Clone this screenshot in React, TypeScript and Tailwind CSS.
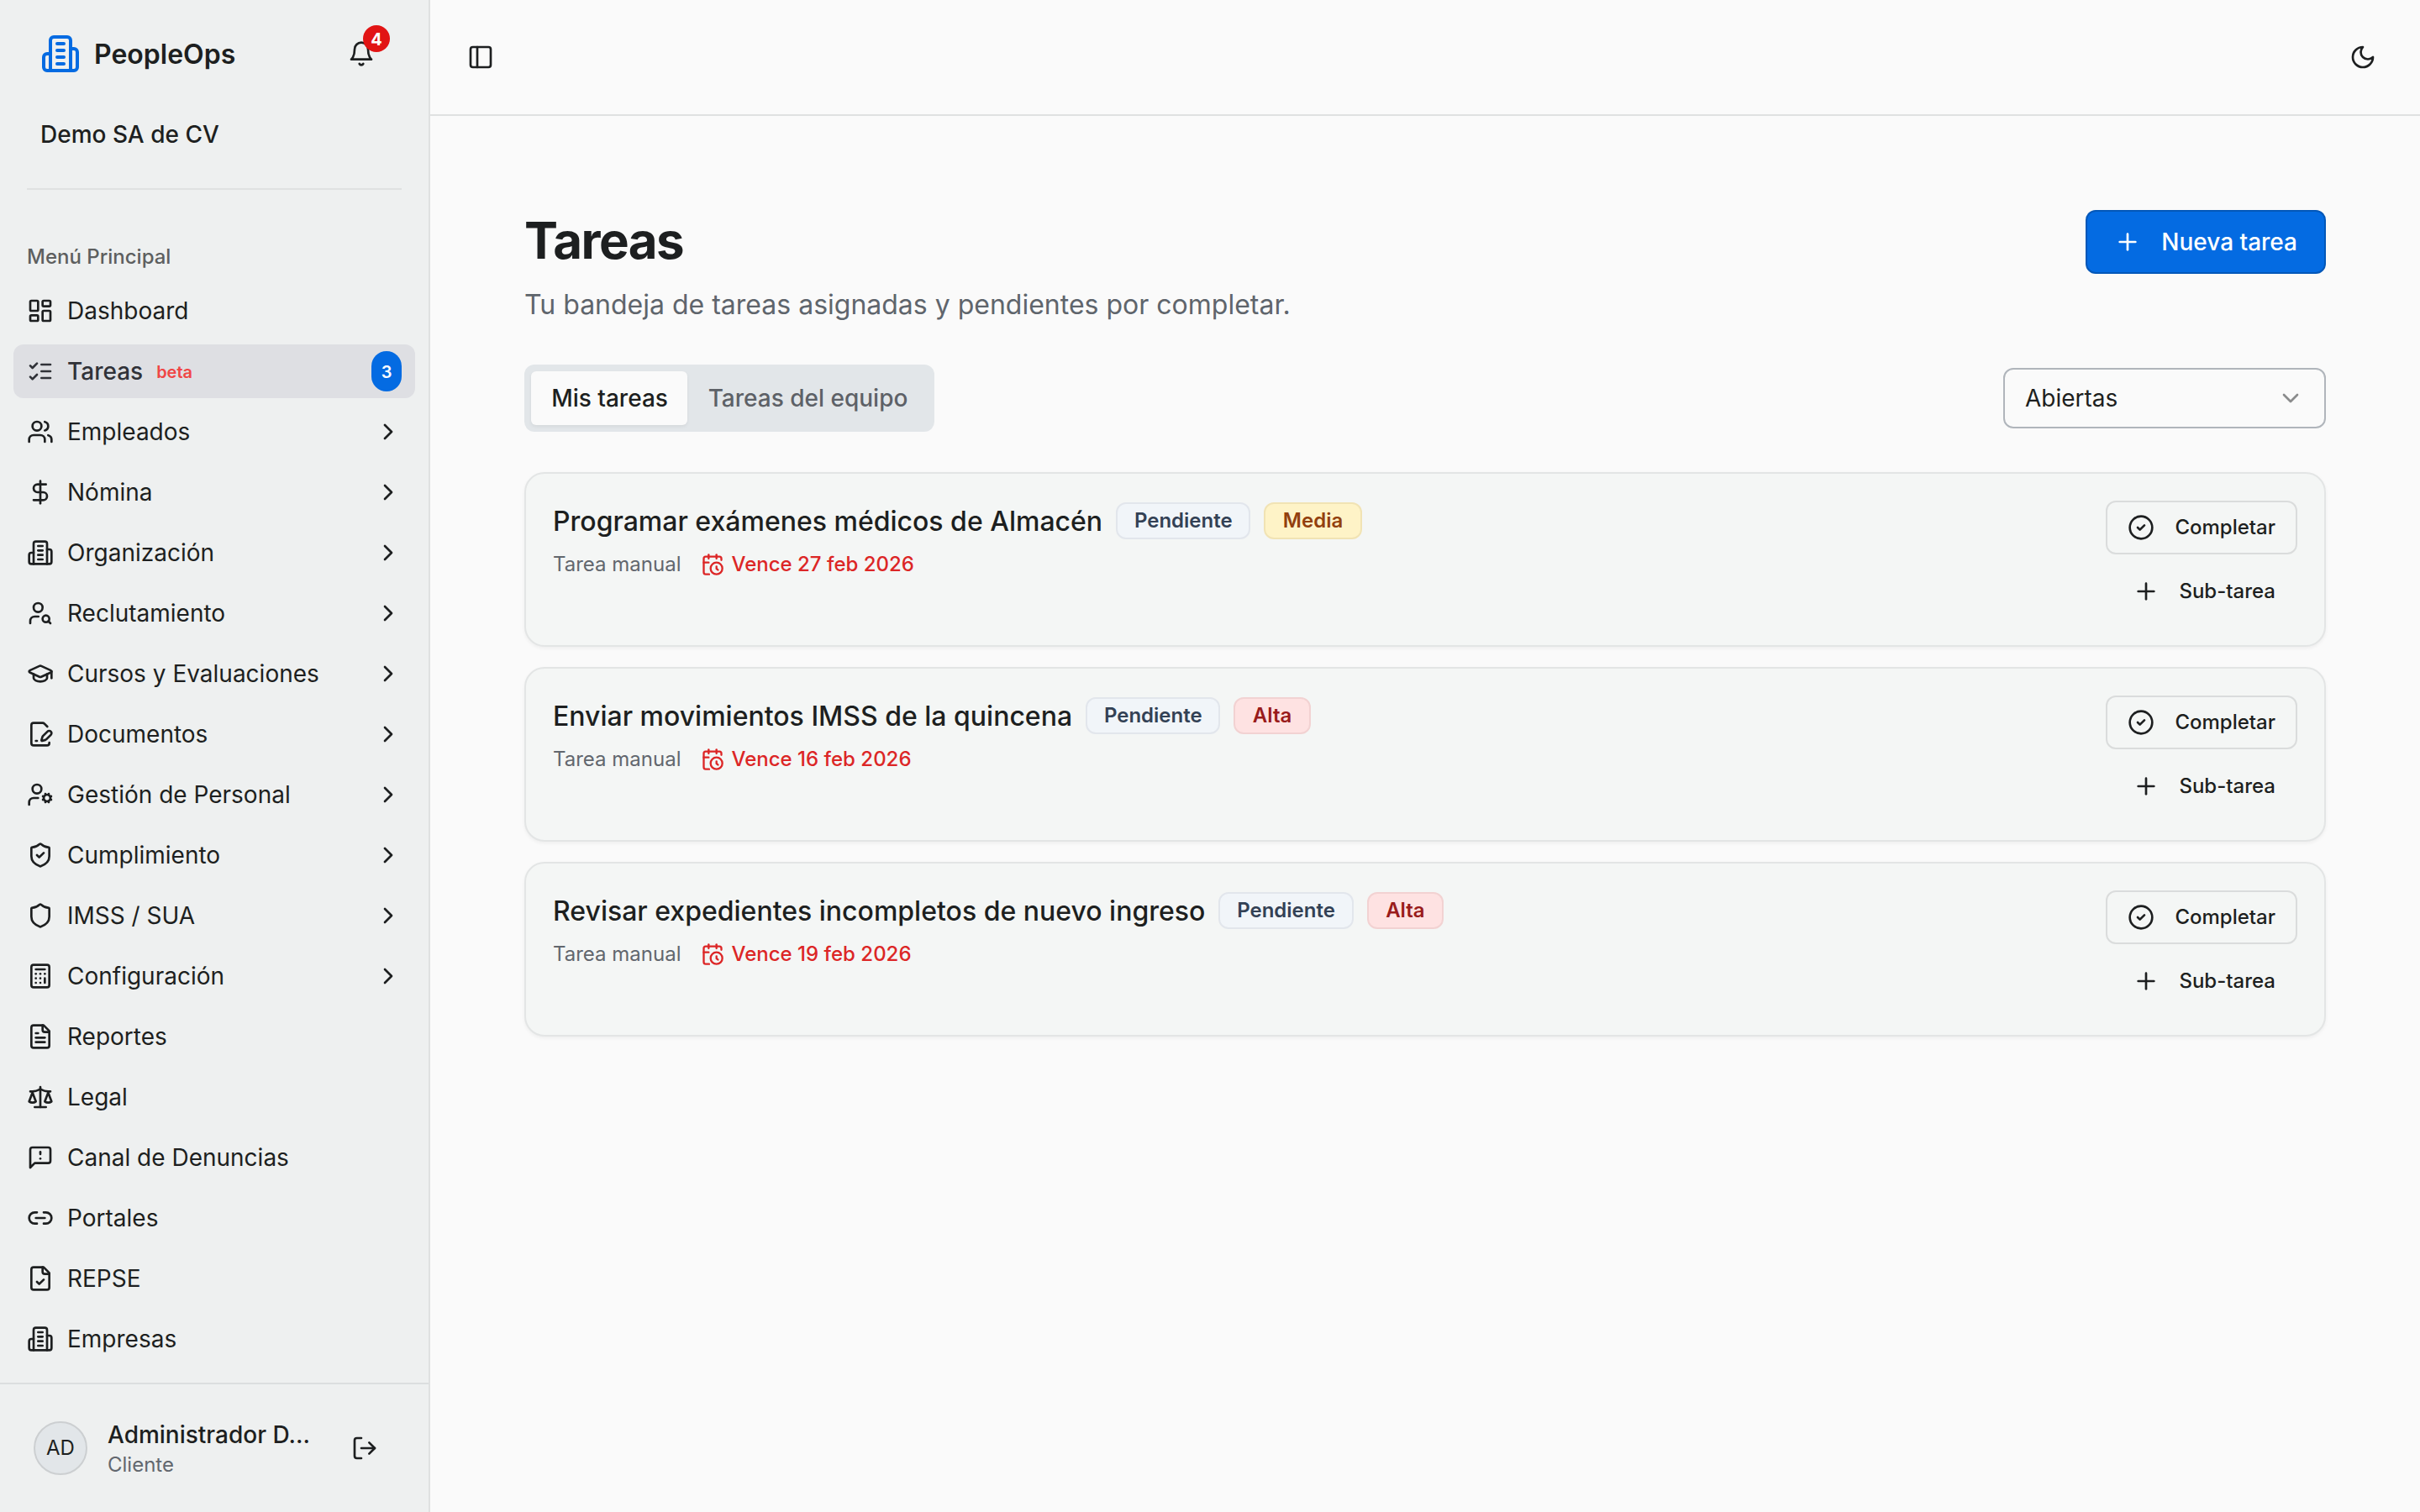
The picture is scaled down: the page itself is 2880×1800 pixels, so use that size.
import type { ReactNode } from 'react';
import {
  Calculator,
  ChevronDown,
  ChevronRight,
  CircleCheck,
  DollarSign,
  FilePenLine,
  GraduationCap,
  LayoutDashboard,
  Link2,
  LogOut,
  PanelLeft,
  Plus,
  Shield,
  ShieldCheck,
  UserCog,
  UserSearch,
  Users,
} from 'lucide-react';
import { clsx } from 'clsx';

type IconProps = { className?: string };

function Icon({ className, children }: { className?: string; children: ReactNode }) {
  return (
    <svg
      viewBox="0 0 24 24"
      fill="none"
      stroke="currentColor"
      strokeWidth={2}
      strokeLinecap="round"
      strokeLinejoin="round"
      className={className}
    >
      {children}
    </svg>
  );
}

const Building = ({ className }: IconProps) => (
  <Icon className={className}>
    <path d="M6 22V4a2 2 0 0 1 2-2h8a2 2 0 0 1 2 2v18Z" />
    <path d="M6 12H4a2 2 0 0 0-2 2v6a2 2 0 0 0 2 2h2" />
    <path d="M18 9h2a2 2 0 0 1 2 2v9a2 2 0 0 1-2 2h-2" />
    <path d="M10 6h4" />
    <path d="M10 10h4" />
    <path d="M10 14h4" />
    <path d="M10 18h4" />
  </Icon>
);

const Bell = ({ className }: IconProps) => (
  <Icon className={className}>
    <path d="M6 8a6 6 0 0 1 12 0c0 7 3 9 3 9H3s3-2 3-9" />
    <path d="M10.3 21a1.94 1.94 0 0 0 3.4 0" />
  </Icon>
);

const ListChecks = ({ className }: IconProps) => (
  <Icon className={className}>
    <path d="m3 17 2 2 4-4" />
    <path d="m3 7 2 2 4-4" />
    <path d="M13 6h8" />
    <path d="M13 12h8" />
    <path d="M13 18h8" />
  </Icon>
);

const FileText = ({ className }: IconProps) => (
  <Icon className={className}>
    <path d="M15 2H6a2 2 0 0 0-2 2v16a2 2 0 0 0 2 2h12a2 2 0 0 0 2-2V7Z" />
    <path d="M14 2v4a2 2 0 0 0 2 2h4" />
    <path d="M10 9H8" />
    <path d="M16 13H8" />
    <path d="M16 17H8" />
  </Icon>
);

const FileCheck = ({ className }: IconProps) => (
  <Icon className={className}>
    <path d="M15 2H6a2 2 0 0 0-2 2v16a2 2 0 0 0 2 2h12a2 2 0 0 0 2-2V7Z" />
    <path d="M14 2v4a2 2 0 0 0 2 2h4" />
    <path d="m9 15 2 2 4-4" />
  </Icon>
);

const Scale = ({ className }: IconProps) => (
  <Icon className={className}>
    <path d="m16 16 3-8 3 8c-.87.65-1.92 1-3 1s-2.13-.35-3-1Z" />
    <path d="m2 16 3-8 3 8c-.87.65-1.92 1-3 1s-2.13-.35-3-1Z" />
    <path d="M7 21h10" />
    <path d="M12 3v18" />
    <path d="M3 7h2c2 0 5-1 7-2 2 1 5 2 7 2h2" />
  </Icon>
);

const MessageWarning = ({ className }: IconProps) => (
  <Icon className={className}>
    <path d="M21 15a2 2 0 0 1-2 2H7l-4 4V5a2 2 0 0 1 2-2h14a2 2 0 0 1 2 2z" />
    <path d="M12 7v2" />
    <path d="M12 13h.01" />
  </Icon>
);

const Moon = ({ className }: IconProps) => (
  <Icon className={className}>
    <path d="M12 3a6 6 0 0 0 9 9 9 9 0 1 1-9-9Z" />
  </Icon>
);

const CalendarClock = ({ className }: IconProps) => (
  <Icon className={className}>
    <path d="M21 7.5V6a2 2 0 0 0-2-2H5a2 2 0 0 0-2 2v14a2 2 0 0 0 2 2h3.5" />
    <path d="M16 2v4" />
    <path d="M8 2v4" />
    <path d="M3 10h5" />
    <path d="M17.5 17.5 16 16.3V14" />
    <circle cx="16" cy="16" r="6" />
  </Icon>
);

const navItems = [
  { name: 'Dashboard', icon: LayoutDashboard },
  { name: 'Tareas', icon: ListChecks, active: true, tag: 'beta', count: 3 },
  { name: 'Empleados', icon: Users, sub: true },
  { name: 'Nómina', icon: DollarSign, sub: true },
  { name: 'Organización', icon: Building, sub: true },
  { name: 'Reclutamiento', icon: UserSearch, sub: true },
  { name: 'Cursos y Evaluaciones', icon: GraduationCap, sub: true },
  { name: 'Documentos', icon: FilePenLine, sub: true },
  { name: 'Gestión de Personal', icon: UserCog, sub: true },
  { name: 'Cumplimiento', icon: ShieldCheck, sub: true },
  { name: 'IMSS / SUA', icon: Shield, sub: true },
  { name: 'Configuración', icon: Calculator, sub: true },
  { name: 'Reportes', icon: FileText },
  { name: 'Legal', icon: Scale },
  { name: 'Canal de Denuncias', icon: MessageWarning },
  { name: 'Portales', icon: Link2 },
  { name: 'REPSE', icon: FileCheck },
  { name: 'Empresas', icon: Building },
];

const tasks = [
  { title: 'Programar exámenes médicos de Almacén', priority: 'Media', due: 'Vence 27 feb 2026' },
  { title: 'Enviar movimientos IMSS de la quincena', priority: 'Alta', due: 'Vence 16 feb 2026' },
  { title: 'Revisar expedientes incompletos de nuevo ingreso', priority: 'Alta', due: 'Vence 19 feb 2026' },
];

function Sidebar() {
  return (
    <aside className="flex w-[512px] shrink-0 flex-col border-r-2 border-[#dfe1e1] bg-[#eef0f0]">
      <div className="flex h-32 items-center justify-between pr-12 pl-12">
        <div className="flex items-center gap-4">
          <Building className="size-12 text-[#046be2]" />
          <span className="pt-0.5 text-[32px] font-semibold">PeopleOps</span>
        </div>
        <button className="relative flex size-16 items-center justify-center">
          <Bell className="size-8" />
          <span className="absolute -top-0.5 -right-0.5 flex size-8 items-center justify-center rounded-full bg-[#e11414] pt-0.5 text-[20px] font-bold text-white">
            4
          </span>
        </button>
      </div>
      <div className="flex h-16 items-center px-12 text-[28px] font-medium">Demo SA de CV</div>
      <div className="mx-8 mt-8 h-0.5 bg-[#dfe1e1]" />
      <div className="mt-12 flex h-16 items-center px-8 text-2xl font-medium text-[#5d5f5f]">
        Menú Principal
      </div>
      <nav className="flex flex-1 flex-col gap-2 px-4">
        {navItems.map((item) => (
          <a
            key={item.name}
            className={clsx(
              'flex h-16 items-center gap-4 rounded-xl px-4 text-[28px]',
              item.active && 'bg-[#dedfe3] font-medium text-[#303238]'
            )}
          >
            <item.icon className="size-8 shrink-0" />
            <span className="flex flex-1 items-center gap-4">
              {item.name}
              {item.tag && (
                <span className="pt-0.5 text-[20px] font-semibold text-[#f04646]">{item.tag}</span>
              )}
            </span>
            {item.count && (
              <span className="flex h-12 w-9 items-center justify-center rounded-full bg-[#046be2] pt-0.5 text-[20px] font-semibold text-white">
                {item.count}
              </span>
            )}
            {item.sub && <ChevronRight className="size-8" />}
          </a>
        ))}
      </nav>
      <div className="flex h-[154px] items-center border-t-2 border-[#dbdedf] pr-[60px] pl-10">
        <div className="flex size-16 items-center justify-center rounded-full border-2 border-[#cccfd1] bg-[#e2e6e9] text-2xl">
          AD
        </div>
        <div className="ml-6 flex flex-1 flex-col">
          <span className="text-[28px] leading-10 font-medium">Administrador D…</span>
          <span className="text-2xl leading-8 text-[#62676e]">Cliente</span>
        </div>
        <LogOut className="size-8" />
      </div>
    </aside>
  );
}

function TaskCard({ task }: { task: (typeof tasks)[number] }) {
  return (
    <div className="flex h-52 items-start justify-between rounded-3xl border-2 border-[#e3e5e5] bg-[#f4f6f5] p-8 shadow-[0_2px_4px_rgba(0,0,0,0.05)]">
      <div className="flex flex-col gap-3">
        <div className="flex h-12 items-center gap-4">
          <h3 className="pt-0.5 text-[32px] font-medium">{task.title}</h3>
          <span className="flex h-11 w-[160.4px] items-center justify-center rounded-xl border-2 border-[#e2e6ec] bg-[#f1f5f9] text-2xl font-semibold text-[#334155]">
            Pendiente
          </span>
          <span
            className={clsx(
              'flex h-11 items-center rounded-xl border-2 px-[20.4px] text-2xl font-semibold',
              task.priority === 'Media'
                ? 'border-[#f1e3b4] bg-[#fef3c7] text-[#92400e]'
                : 'border-[#f2d2d2] bg-[#fee2e2] text-[#991b1b]'
            )}
          >
            {task.priority}
          </span>
        </div>
        <div className="flex h-8 items-center gap-6 text-2xl">
          <span className="text-[#62676e]">Tarea manual</span>
          <span className="flex items-center gap-2 font-medium text-[#dc2626]">
            <CalendarClock className="size-7" />
            {task.due}
          </span>
        </div>
      </div>
      <div className="flex flex-col items-end gap-3 text-2xl font-medium">
        <button className="flex h-16 items-center gap-6 rounded-xl border-2 border-[#dadcdc] px-6">
          <CircleCheck className="size-8" />
          Completar
        </button>
        <button className="flex h-16 items-center gap-[23px] rounded-xl border-2 border-transparent px-6">
          <Plus className="size-8" />
          Sub-tarea
        </button>
      </div>
    </div>
  );
}

export default function App() {
  return (
    <div className="flex h-[1800px] w-[2880px] overflow-hidden bg-[#fafafa] font-['Inter',sans-serif] text-[#1d1f20] antialiased [font-optical-sizing:none]">
      <Sidebar />
      <main className="flex flex-1 flex-col">
        <header className="flex h-[138px] items-center justify-between border-b-2 border-[#dfe1e1] pr-[52px] pl-11">
          <PanelLeft className="size-8" />
          <Moon className="size-8" />
        </header>
        <div className="flex flex-col gap-12 p-28">
          <div className="flex items-start justify-between">
            <div className="flex flex-col gap-4">
              <h1 className="text-[60px] leading-[72px] font-bold tracking-tight">Tareas</h1>
              <p className="-mb-px pt-px text-[32px] leading-[48px] text-[#5f656c]">
                Tu bandeja de tareas asignadas y pendientes por completar.
              </p>
            </div>
            <button className="flex h-[76px] items-center gap-6 rounded-xl border-2 border-[#0357b8] bg-[#046be2] px-8 text-[28px] font-medium text-white">
              <Plus className="size-8" />
              Nueva tarea
            </button>
          </div>
          <div className="flex items-center justify-between">
            <div className="flex h-20 w-[488px] items-center rounded-xl bg-[#e2e6e9] p-2 text-[28px] font-medium">
              <button className="h-16 w-[186px] shrink-0 rounded-md bg-[#fafafa] pl-px whitespace-nowrap shadow-[0_2px_4px_rgba(0,0,0,0.06)]">
                Mis tareas
              </button>
              <button className="h-16 flex-1 pl-px whitespace-nowrap text-[#5d6167]">Tareas del equipo</button>
            </div>
            <button className="flex h-[72px] w-96 items-center justify-between rounded-xl border-2 border-[#b0b5bb] px-6 text-[28px]">
              Abiertas
              <ChevronDown className="size-8 opacity-50" />
            </button>
          </div>
          <div className="flex flex-col gap-6">
            {tasks.map((task) => (
              <TaskCard key={task.title} task={task} />
            ))}
          </div>
        </div>
      </main>
    </div>
  );
}
